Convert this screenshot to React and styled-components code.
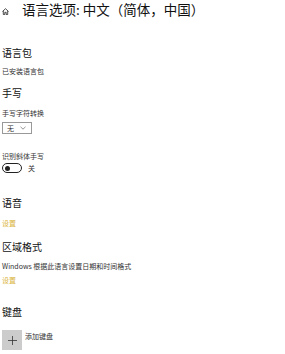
import styled, { createGlobalStyle } from "styled-components"

const Global = createGlobalStyle`
  body {
    margin: 0;
    background: #fff;
    font-family: "Noto Sans CJK SC", "Noto Sans", sans-serif;
    color: #000;
  }
`

const Page = styled.div`
  display: flex;
  flex-direction: column;
  padding: 0 2px;
`

const TitleRow = styled.div`
  display: flex;
  align-items: center;
  gap: 13px;
  height: 20px;
  margin-top: -1px;
  svg {
    margin-top: 4px;
  }
`

const Title = styled.h1`
  margin: 0;
  font-size: 13.5px;
  font-weight: 400;
  line-height: 20px;
  color: #111;
`

const Section = styled.section`
  display: flex;
  flex-direction: column;
  margin-top: ${(p) => p.$top || 0}px;
`

const Heading = styled.h2`
  margin: 0;
  font-size: 10px;
  font-weight: 400;
  line-height: 14px;
  color: #111;
`

const Note = styled.div`
  font-size: 7px;
  line-height: 10px;
  color: #333;
  margin-top: ${(p) => p.$top || 0}px;
`

const Link = styled.div`
  font-size: 7px;
  line-height: 10px;
  color: #d9b43a;
  margin-top: ${(p) => p.$top || 0}px;
`

const Select = styled.div`
  display: flex;
  align-items: center;
  gap: 6px;
  width: 30px;
  height: 12px;
  box-sizing: border-box;
  border: 1px solid #999;
  padding: 0 4px;
  margin-top: 4px;
  font-size: 7px;
  color: #333;
`

const ToggleRow = styled.div`
  display: flex;
  align-items: center;
  gap: 6px;
  margin-top: 2px;
  font-size: 7px;
  line-height: 10px;
  color: #333;
`

const Toggle = styled.div`
  width: 20px;
  height: 10px;
  box-sizing: border-box;
  border: 1px solid #222;
  border-radius: 5px;
  display: flex;
  align-items: center;
  padding-left: 2px;
  &::before {
    content: "";
    width: 5px;
    height: 5px;
    border-radius: 50%;
    background: #222;
  }
`

const AddRow = styled.div`
  display: flex;
  align-items: flex-start;
  gap: 3px;
  margin-top: 11px;
  font-size: 7px;
  color: #333;
`

const AddButton = styled.div`
  width: 20px;
  height: 20px;
  background: #ccc;
  display: flex;
  align-items: center;
  justify-content: center;
`

const AddLabel = styled.span`
  line-height: 10px;
  margin-top: 1px;
`

const Home = () => (
  <svg width="7" height="7" viewBox="0 0 7 7" fill="none" stroke="#222" strokeWidth="0.8">
    <path d="M0.5 3.5 L3.5 0.7 L6.5 3.5 M1.3 2.8 V6.5 H2.8 V4.3 H4.2 V6.5 H5.7 V2.8" />
  </svg>
)

const Chevron = () => (
  <svg width="6" height="4" viewBox="0 0 6 4" fill="none" stroke="#666" strokeWidth="0.7">
    <path d="M0.5 0.8 L3 3.2 L5.5 0.8" />
  </svg>
)

const Plus = () => (
  <svg width="9" height="9" viewBox="0 0 9 9" stroke="#333" strokeWidth="0.8">
    <path d="M4.5 0 V9 M0 4.5 H9" />
  </svg>
)

export default function App() {
  return (
    <>
      <Global />
      <Page>
        <TitleRow>
          <Home />
          <Title>语言选项: 中文（简体，中国）</Title>
        </TitleRow>

        <Section $top={27}>
          <Heading>语言包</Heading>
          <Note $top={6}>已安装语言包</Note>
        </Section>

        <Section $top={10}>
          <Heading>手写</Heading>
          <Note $top={8}>手写字符转换</Note>
          <Select>
            <span>无</span>
            <Chevron />
          </Select>
          <Note $top={17}>识别斜体手写</Note>
          <ToggleRow>
            <Toggle />
            <span>关</span>
          </ToggleRow>
        </Section>

        <Section $top={23}>
          <Heading>语音</Heading>
          <Link $top={8}>设置</Link>
        </Section>

        <Section $top={12}>
          <Heading>区域格式</Heading>
          <Note $top={7}>Windows 根据此语言设置日期和时间格式</Note>
          <Link $top={4}>设置</Link>
        </Section>

        <Section $top={20}>
          <Heading>键盘</Heading>
          <AddRow>
            <AddButton>
              <Plus />
            </AddButton>
            <AddLabel>添加键盘</AddLabel>
          </AddRow>
        </Section>
      </Page>
    </>
  )
}
